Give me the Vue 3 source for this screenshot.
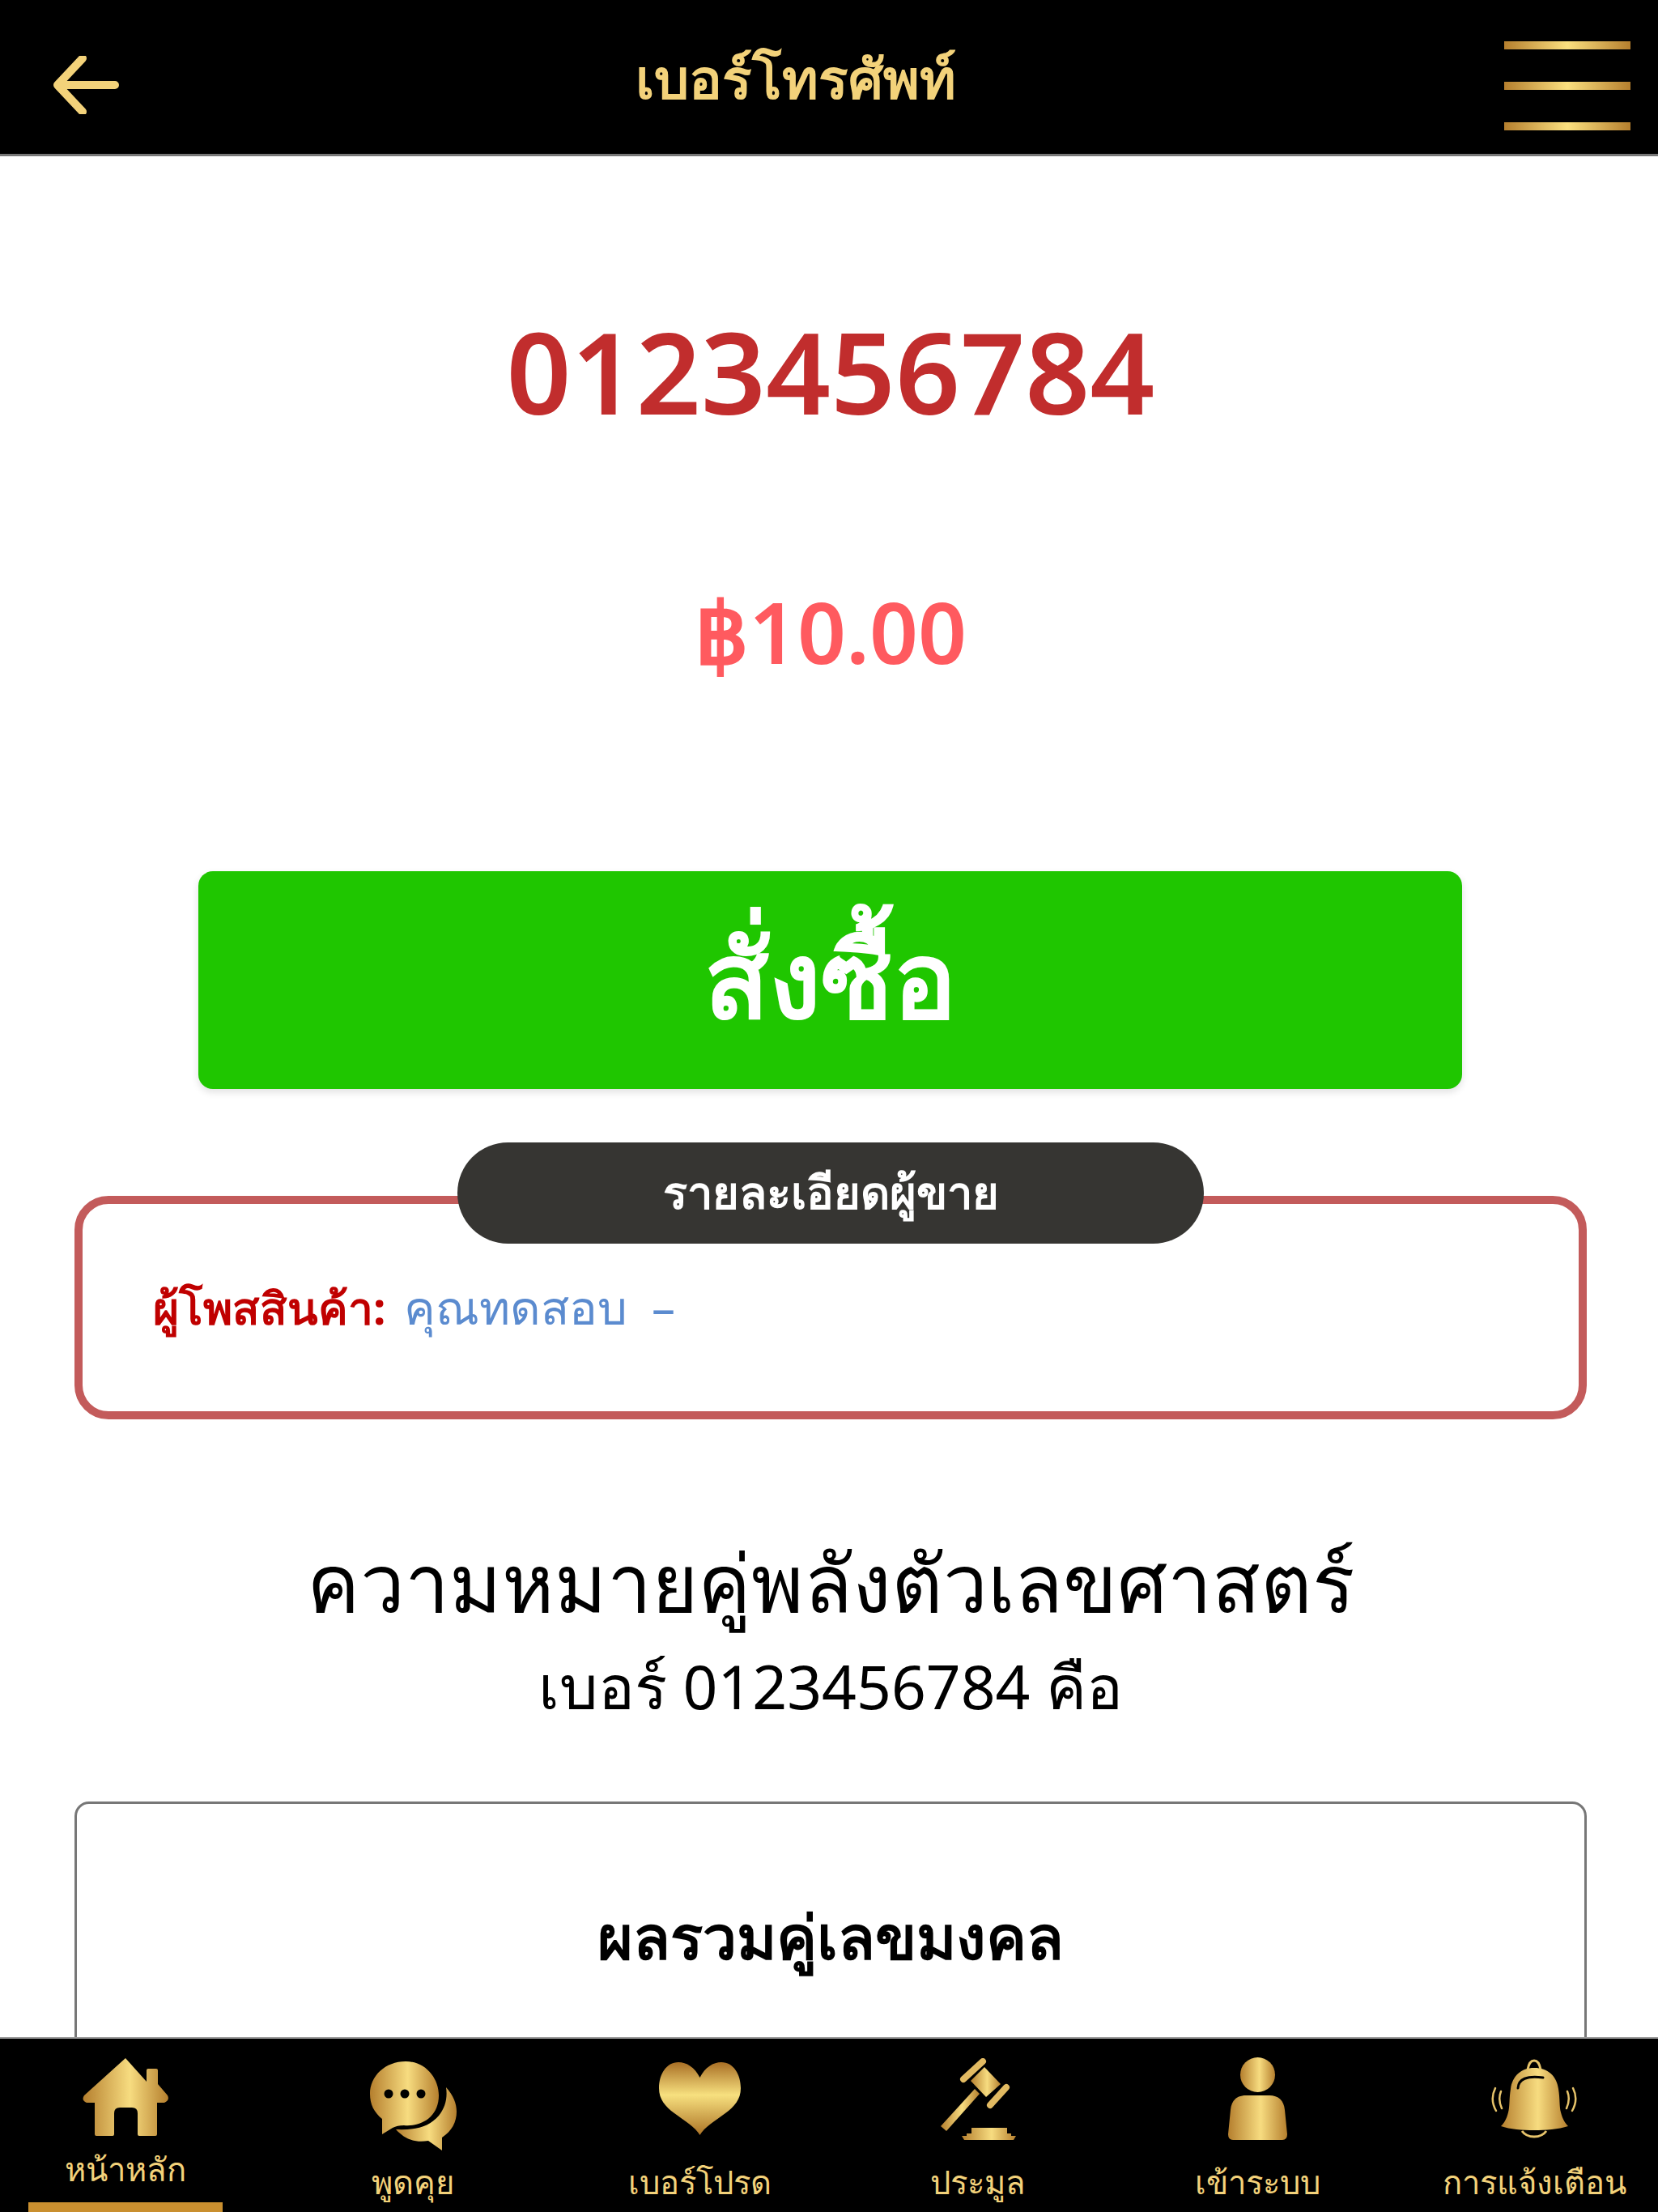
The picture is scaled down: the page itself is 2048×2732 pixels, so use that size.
<script setup>
const tabs = [
  { id: 'home', label: 'หน้าหลัก', active: true },
  { id: 'chat', label: 'พูดคุย' },
  { id: 'heart', label: 'เบอร์โปรด' },
  { id: 'gavel', label: 'ประมูล' },
  { id: 'user', label: 'เข้าระบบ' },
  { id: 'bell', label: 'การแจ้งเตือน' },
];
</script>

<template>
  <div class="page">
    <svg class="defs" width="0" height="0">
      <defs>
        <linearGradient id="gold" x1="0" y1="0" x2="1" y2="0">
          <stop offset="0" stop-color="#b57f2e" />
          <stop offset="0.55" stop-color="#f7dc80" />
          <stop offset="1" stop-color="#b57f2e" />
        </linearGradient>
        <linearGradient id="goldv" x1="0" y1="0" x2="0" y2="1">
          <stop offset="0" stop-color="#a96f25" />
          <stop offset="0.45" stop-color="#f7e07f" />
          <stop offset="1" stop-color="#ad7426" />
        </linearGradient>
      </defs>
    </svg>

    <header class="topbar">
      <svg class="back" viewBox="0 0 82 72">
        <path d="M77 36H8M37 3L6 36l31 33" fill="none" stroke="#f3d27a" stroke-width="10" stroke-linecap="round" stroke-linejoin="round" />
      </svg>
      <h1 class="title">เบอร์โทรศัพท์</h1>
      <div class="burger"><i></i><i></i><i></i></div>
    </header>

    <main class="content">
      <div class="phone">0123456784</div>
      <div class="price">฿10.00</div>
      <button class="buy">สั่งซื้อ</button>

      <section class="seller">
        <div class="seller-tag">รายละเอียดผู้ขาย</div>
        <p class="seller-row"><b>ผู้โพสสินค้า:</b> <span>คุณทดสอบ &nbsp;–</span></p>
      </section>

      <h2 class="meaning">ความหมายคู่พลังตัวเลขศาสตร์</h2>
      <p class="meaning-sub">เบอร์ 0123456784 คือ</p>

      <section class="lucky">
        <h3>ผลรวมคู่เลขมงคล</h3>
      </section>
    </main>

    <nav class="tabbar">
      <div v-for="tab in tabs" :key="tab.id" class="tab" :class="{ active: tab.active }">
        <svg v-if="tab.id === 'home'" class="ico ico-home" viewBox="0 0 107 96">
          <path fill="url(#gold)" d="M53 0L79 29V15q0-2 2-2h10q2 0 2 2v17l12 14q3 6-4 9H92v39q0 2-2 2H70q-2 0-2-2V68q0-7-7-7H46q-7 0-7 7v26q0 2-2 2H17q-2 0-2-2V55H5q-7-3-3-9z" />
        </svg>
        <svg v-else-if="tab.id === 'chat'" class="ico ico-chat" viewBox="0 0 107 110">
          <path fill="url(#gold)" d="M44 0c25 0 41 21 41 42 0 26-21 39-43 37-6 0-10 1-14 3L15 90V71C5 63 0 53 0 40 0 18 19 0 44 0z" />
          <path fill="url(#gold)" d="M94 32c9 10 13 20 13 30 0 13-6 24-18 32v16L72 98c-18 3-30-3-40-14 24 1 41-3 53-17 8-10 11-22 9-35z" />
          <circle cx="23" cy="40" r="5.5" fill="#000" /><circle cx="43" cy="40" r="5.5" fill="#000" /><circle cx="63" cy="40" r="5.5" fill="#000" />
        </svg>
        <svg v-else-if="tab.id === 'heart'" class="ico ico-heart" viewBox="0 0 101 90">
          <path fill="url(#goldv)" d="M50.500 19C44 6 34 0 24 0 9 0 0 15 0 32c0 14 8 23 19 31 13 10 26 17 31.500 27C56 80 69 73 82 63c11-8 19-17 19-31C101 15 92 0 77 0 67 0 57 6 50.500 19z" />
        </svg>
        <svg v-else-if="tab.id === 'gavel'" class="ico ico-gavel" viewBox="0 0 94 102">
          <path fill="url(#gold)" d="M55 11l20 21-18 16-19-20z" />
          <path d="M53 4L29 26M82 36L62 58" fill="none" stroke="#e2ba62" stroke-width="8" stroke-linecap="round" />
          <path fill="url(#gold)" d="M43 38l6 6L8 90l-7-6z" />
          <path fill="url(#gold)" d="M39 86h44v7h5v3h6l-3 5H30l-3-5h6v-3h6z" />
        </svg>
        <svg v-else-if="tab.id === 'user'" class="ico ico-user" viewBox="0 0 73 102">
          <ellipse cx="36.500" cy="21.500" rx="21.500" ry="21.500" fill="url(#gold)" />
          <path fill="url(#gold)" d="M22 47h29c11 0 18 6 19 18l3 30q0 7-6 7H6q-6 0-6-7l3-30c1-12 8-18 19-18z" />
        </svg>
        <svg v-else class="ico ico-bell" viewBox="0 0 106 98">
          <path fill="url(#gold)" d="M53 11c17 0 28 10 30 26 2 12 1 22 3 29 2 8 5 13 9 17-12 4-28 5-42 5s-30-1-41-5c4-4 7-9 9-17 2-7 1-17 3-29 2-16 13-26 29-26z" />
          <path d="M45 13q2-11 8-11t8 11" fill="none" stroke="#e6c36a" stroke-width="3" />
          <path d="M33 36q1-17 31-13" fill="none" stroke="#000" stroke-width="3" stroke-linecap="round" />
          <path d="M38 89q5 7 15 7t15-7" fill="none" stroke="#e6c36a" stroke-width="3" />
          <path d="M5 36q-7 14 1 28M12 40q-4 10 1 21M101 36q7 14-1 28M94 40q4 10-1 21" fill="none" stroke="#e6c36a" stroke-width="2.500" stroke-linecap="round" />
        </svg>
        <span class="tab-label">{{ tab.label }}</span>
      </div>
    </nav>
  </div>
</template>

<style>
html,
body {
  margin: 0;
  background: #fff;
}
</style>

<style scoped>
.page {
  height: 2732px;
  display: flex;
  flex-direction: column;
  overflow: hidden;
  font-family: "Noto Sans", "Open Sans", sans-serif;
  color: #000;
}

.defs {
  position: absolute;
}

.topbar {
  height: 190px;
  flex: none;
  background: #000;
  border-bottom: 3px solid #777;
  display: flex;
  align-items: center;
  justify-content: space-between;
  padding: 0 34px 0 65px;
}

.back {
  width: 82px;
  height: 72px;
  margin-top: 20px;
}

.title {
  margin: 6px 40px 0 0;
  font-size: 68px;
  font-weight: 700;
  color: #f3d27a;
}

.burger {
  width: 156px;
  height: 110px;
  margin-top: 22px;
  display: flex;
  flex-direction: column;
  justify-content: space-between;
}

.burger i {
  height: 10px;
  background: linear-gradient(90deg, #b57f2e, #fbe07f, #b57f2e);
}

.content {
  flex: 1;
  min-height: 0;
  overflow: hidden;
  padding: 0 88px 0 92px;
}

.phone {
  margin-top: 190px;
  text-align: center;
  font-size: 140px;
  line-height: 150px;
  font-weight: 600;
  color: #c12d2d;
}

.price {
  margin-top: 192px;
  text-align: center;
  font-size: 105px;
  line-height: 110px;
  font-weight: 600;
  color: #ff5a5f;
}

.buy {
  display: block;
  width: 1561px;
  height: 269px;
  margin: 241px 0 0 153px;
  border: none;
  border-radius: 18px;
  background: #1fc600;
  box-shadow: 0 4px 10px rgba(0, 0, 0, 0.12);
  color: #fff;
  font-family: inherit;
  font-size: 131px;
  font-weight: 600;
}

.seller {
  position: relative;
  height: 276px;
  box-sizing: border-box;
  margin-top: 132px;
  border: 10px solid #c35b5b;
  border-radius: 42px;
}

.seller-tag {
  position: absolute;
  top: -76px;
  left: 463px;
  width: 922px;
  height: 125px;
  border-radius: 63px;
  background: #363532;
  color: #fff;
  font-size: 56px;
  font-weight: 700;
  display: flex;
  align-items: center;
  justify-content: center;
}

.seller-row {
  margin: 92px 0 0 87px;
  font-size: 55px;
  line-height: 70px;
}

.seller-row b {
  color: #c00000;
  font-weight: 700;
}

.seller-row span {
  color: #5b8bcf;
  font-size: 58px;
  margin-left: 8px;
}

.meaning {
  margin: 135px 0 0;
  text-align: center;
  font-size: 98px;
  line-height: 130px;
  font-weight: 400;
}

.meaning-sub {
  margin: 14px 0 0;
  text-align: center;
  font-size: 75px;
  line-height: 100px;
}

.lucky {
  height: 800px;
  box-sizing: border-box;
  margin-top: 93px;
  border: 3px solid #777;
  border-radius: 18px;
  text-align: center;
  overflow: hidden;
}

.lucky h3 {
  margin: 113px 0 0;
  font-size: 75px;
  line-height: 100px;
  font-weight: 600;
}

.tabbar {
  height: 214px;
  flex: none;
  background: #000;
  border-top: 2px solid #999;
  display: grid;
  grid-template-columns: 310px 400px 308px 380px 310px 340px;
}

.tab {
  display: flex;
  flex-direction: column;
  align-items: center;
  position: relative;
}

.tab:last-child {
  padding-left: 34px;
}

.ico {
  flex: none;
}

.ico-home {
  width: 107px;
  height: 96px;
  margin-top: 24px;
}

.ico-chat {
  width: 107px;
  height: 110px;
  margin-top: 28px;
}

.ico-heart {
  width: 101px;
  height: 90px;
  margin-top: 29px;
}

.ico-gavel {
  width: 94px;
  height: 102px;
  margin-top: 24px;
}

.ico-user {
  width: 73px;
  height: 102px;
  margin-top: 23px;
}

.ico-bell {
  width: 106px;
  height: 98px;
  margin-top: 25px;
}

.tab-label {
  margin-top: auto;
  margin-bottom: 9px;
  font-size: 40px;
  line-height: 56px;
  color: #f3d27a;
}

.tab.active .tab-label {
  margin-bottom: 25px;
}

.tab.active::after {
  content: "";
  position: absolute;
  left: 35px;
  bottom: 0;
  width: 240px;
  height: 12px;
  background: #c98f2f;
}
</style>
